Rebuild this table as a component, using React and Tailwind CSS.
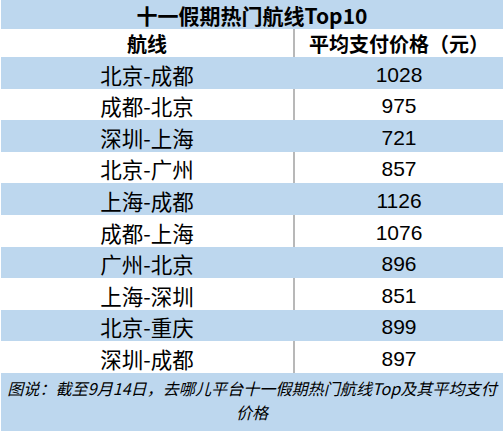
// 十一假期热门航线 Top10 — spreadsheet-style table snapshot
const ROUTES = [
  { route: '北京-成都', price: 1028, h: 'h-[32px]' },
  { route: '成都-北京', price: 975, h: 'h-[31px]' },
  { route: '深圳-上海', price: 721, h: 'h-[32px]' },
  { route: '北京-广州', price: 857, h: 'h-[31px]' },
  { route: '上海-成都', price: 1126, h: 'h-[32px]' },
  { route: '成都-上海', price: 1076, h: 'h-[32px]' },
  { route: '广州-北京', price: 896, h: 'h-[31px]' },
  { route: '上海-深圳', price: 851, h: 'h-[32px]' },
  { route: '北京-重庆', price: 899, h: 'h-[31px]' },
  { route: '深圳-成都', price: 897, h: 'h-[32px]' },
];

const CJK = "font-['Noto_Sans_CJK_SC',sans-serif]";

export default function App() {
  return (
    <div className={`w-[503px] h-[431px] bg-white pl-[1px] text-black ${CJK}`}>
      {/* Title */}
      <div className="h-[29px] bg-[#bdd7ee] flex items-end justify-center">
        <span className="text-[21px] font-bold leading-[27px]">十一假期热门航线Top10</span>
      </div>

      {/* Header */}
      <div className="h-[28px] flex bg-white">
        <div className="w-[294px] flex items-end justify-center border-r-2 border-[#b8b8b8]">
          <span className="text-[20px] font-bold leading-[26px]">航线</span>
        </div>
        <div className="flex-1 flex items-end justify-center">
          <span className="text-[20px] font-bold leading-[26px]">平均支付价格（元）</span>
        </div>
      </div>

      {/* Rows */}
      {ROUTES.map((r, i) => {
        const blue = i % 2 === 0;
        return (
          <div key={r.route} className={`${r.h} flex ${blue ? 'bg-[#bdd7ee]' : 'bg-white'}`}>
            <div
              className={`w-[294px] flex items-center justify-center pt-[3px] border-r-2 ${blue ? 'border-[#bdd7ee]' : 'border-[#b8b8b8]'}`}
            >
              <span className="text-[21.5px] leading-[26px]">{r.route}</span>
            </div>
            <div className="flex-1 flex items-center justify-center pt-[3px]">
              <span className="text-[21px] leading-[26px] font-['Liberation_Sans',sans-serif]">{r.price}</span>
            </div>
          </div>
        );
      })}

      {/* Caption */}
      <div className="h-[58px] bg-[#bdd7ee] pt-[3px] text-center italic text-[16.1px] leading-[24px]">
        <div className="whitespace-nowrap">图说：截至9月14日，去哪儿平台十一假期热门航线Top及其平均支付</div>
        <div>价格</div>
      </div>
    </div>
  );
}
